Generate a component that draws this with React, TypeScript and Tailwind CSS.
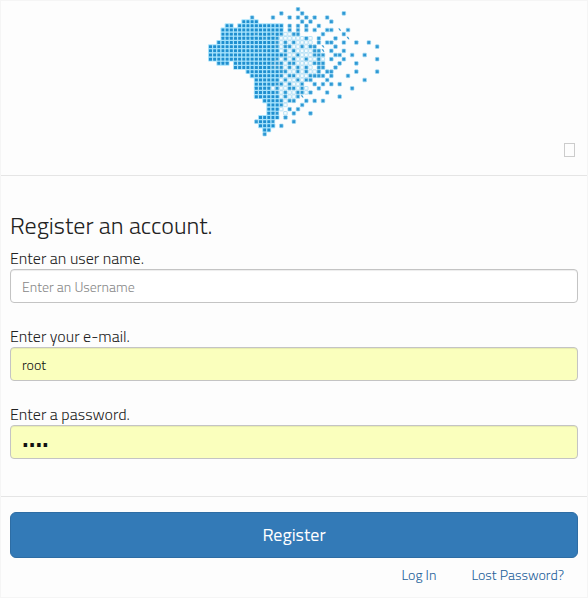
import React from "react";

/*
 * One character per cell of the map mosaic:
 * "#" solid cell, "o" faint outlined cell, "x" dark cell among faint ones,
 * "d" loose square, "s" small loose speck.
 */
const mosaic = [
  ".....................d...................",
  ".................d....d.........d........",
  "..........d....d...d.d.d.d..d............",
  "........####..........d.d....d...........",
  "....##.###########.d.d.d..d..............",
  "...###############.d.d.d.d..dd.s.d.......",
  "...########x###x#xoodd.....d....d........",
  "...##########x##xoooooodo.d...d..s.......",
  "..##############xoxoxoooo.d.dd..d..d..d..",
  "################xoxxooxoxd.s..d.........d",
  "############x####oxoxoooodds.d..d........",
  "##################xooxoooddd..dd..d..d...",
  "################xoxoxooxoodo.d..d.......d",
  "..###.#########xxxoxxooooxdd...d...d.....",
  "......#########xxxoxoxoxo.dd..d..........",
  ".........########xxooxoxood.dd.....d....d",
  "..........#######xoxxoooxddd.d...d.......",
  "...........######oxooxoxd...d........d...",
  "...........#####xxoxoox..d.d.d.d.........",
  "...........####oxooxxoxo..d.......d......",
  "...........#####xoxooxxod...d............",
  "...........######oxooxs........d.........",
  ".............####xoxd..d.d.d.............",
  "..............###xo...d..................",
  "..............###o.d.d...................",
  "..............##x.o.d...d................",
  "............#####.d......................",
  "...........d###x....d....................",
  "............####.d.......................",
  ".............##..........................",
  ".............d...........................",
];

function BrazilLogo() {
  const cells: React.ReactNode[] = [];
  mosaic.forEach((row, r) => {
    row.split("").forEach((kind, c) => {
      if (kind === ".") return;
      const x = c * 12.5;
      const y = r * 12.5;
      const key = `${r}-${c}`;
      if (kind === "#") {
        cells.push(
          <g key={key}>
            <rect x={x - 1} y={y - 1} width="14.5" height="14.5" rx="3" fill="#a4e2fc" />
            <rect x={x + 2} y={y + 2} width="9" height="9" rx="1" fill="#1f8fcf" />
          </g>,
        );
      } else if (kind === "o") {
        cells.push(
          <rect key={key} x={x + 1} y={y + 1} width="10.5" height="10.5" rx="1" fill="#f4fbfe" stroke="#b9e2f6" strokeWidth="3" />,
        );
      } else if (kind === "x") {
        cells.push(
          <rect key={key} x={x + 1} y={y + 1} width="10.5" height="10.5" rx="1" fill="#2896d2" stroke="#a9dcf5" strokeWidth="2" />,
        );
      } else if (kind === "d") {
        cells.push(
          <rect key={key} x={x + 1} y={y + 1} width="11" height="11" rx="2" fill="#2f98d3" stroke="#a3dcf6" strokeWidth="2" />,
        );
      } else {
        cells.push(<path key={key} d={`M${x + 2} ${y + 2}h5l4 7h-4z`} fill="#3599d1" />);
      }
    });
  });
  return (
    <svg viewBox="0 0 514 390" className="h-[130px] w-[172px]" role="img" aria-label="Brazil">
      {cells}
    </svg>
  );
}

const inputClass =
  "block h-[34px] w-full rounded border border-[#c4c4c4] px-[11px] text-sm text-[#111] shadow-[inset_0_1px_1px_rgba(0,0,0,0.075)] outline-none placeholder:text-[#888]";

type FieldProps = {
  id: string;
  label: string;
  type: string;
  placeholder?: string;
  value?: string;
};

function Field({ id, label, type, placeholder, value }: FieldProps) {
  return (
    <div>
      <label htmlFor={id} className="block text-base leading-[22px]">
        {label}
      </label>
      <input
        id={id}
        type={type}
        placeholder={placeholder}
        defaultValue={value}
        className={`${inputClass} ${value ? "bg-[#faffbd]" : "bg-white"}`}
      />
    </div>
  );
}

export default function App() {
  return (
    <main className="border border-[#f5f5f5] bg-[#fdfdfd] font-['Titillium_Web',Roboto,sans-serif] font-light text-[#222]">
      <header className="border-b border-[#e5e5e5] px-2 pt-1.5 pb-[18px]">
        <div className="flex justify-center">
          <BrazilLogo />
        </div>
        <div className="flex justify-end pt-1.5 pr-1">
          <button type="button" aria-label="Close" className="h-[14px] w-[11px] border border-[#ccc]" />
        </div>
      </header>
      <form onSubmit={(event) => event.preventDefault()}>
        <div className="px-[9px] pt-8 pb-[37px]">
          <h1 className="pb-1 text-2xl leading-[35px]">Register an account.</h1>
          <div className="flex flex-col gap-[22px]">
            <Field id="username" label="Enter an user name." type="text" placeholder="Enter an Username" />
            <Field id="email" label="Enter your e-mail." type="email" value="root" />
            <Field id="password" label="Enter a password." type="password" value="root" />
          </div>
        </div>
        <footer className="border-t border-[#e5e5e5] px-[9px] pt-[15px] pb-3">
          <button
            type="submit"
            className="block h-[46px] w-full rounded-md border border-[#2e6da4] bg-[#337ab7] text-lg font-normal text-white"
          >
            Register
          </button>
          <nav className="flex justify-end gap-[35px] pt-[7px] pr-3.5 text-sm text-[#23609a]">
            <a href="#login">Log In</a>
            <a href="#lost-password">Lost Password?</a>
          </nav>
        </footer>
      </form>
    </main>
  );
}
